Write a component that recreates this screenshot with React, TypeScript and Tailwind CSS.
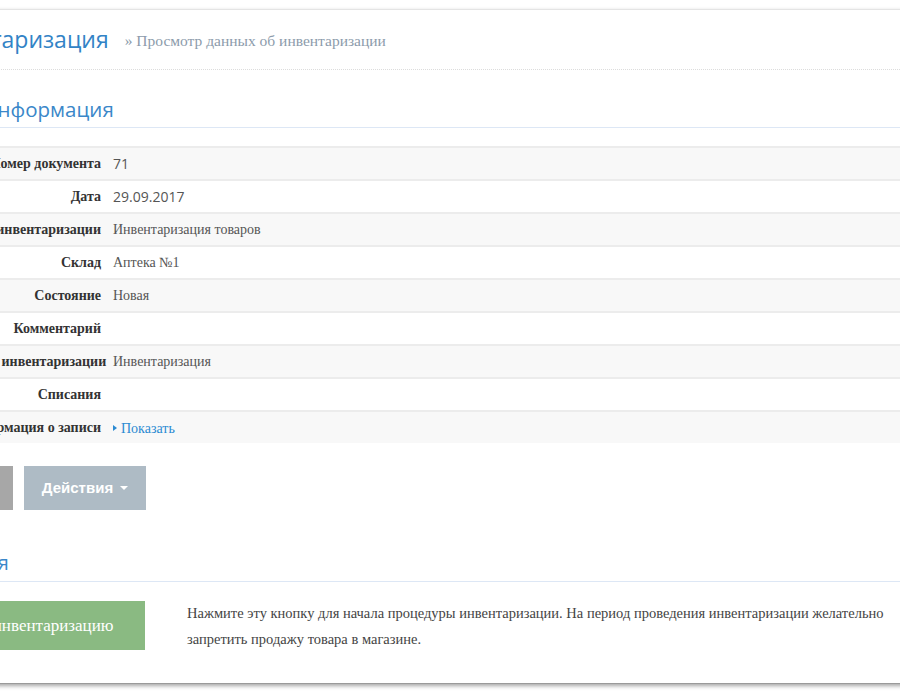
import React from 'react'

type Row = { label: string; value?: React.ReactNode; sans?: boolean }

const rows: Row[] = [
	{ label: 'Номер документа', value: '71', sans: true },
	{ label: 'Дата', value: '29.09.2017', sans: true },
	{ label: 'Тип инвентаризации', value: 'Инвентаризация товаров' },
	{ label: 'Склад', value: 'Аптека №1' },
	{ label: 'Состояние', value: 'Новая' },
	{ label: 'Комментарий' },
	{ label: 'Документ инвентаризации', value: 'Инвентаризация' },
	{ label: 'Списания' },
	{
		label: 'Информация о записи',
		value: (
			<a className="inline-flex items-center gap-[4px] text-[#2b8ad2]">
				<span className="inline-block w-0 h-0 border-y-[3.5px] border-y-transparent border-l-[4px] border-l-[#2b8ad2]" />
				Показать
			</a>
		),
	},
]

const serif = "font-['Liberation_Serif',serif]"
const sans = "font-['Open_Sans',sans-serif]"

export default function App() {
	return (
		<div className="w-[900px] h-[700px] overflow-hidden bg-white">
			<div className="w-[1100px] ml-[-100px] mt-[9px] border-t border-[#e4e4e4] border-b border-b-[#9a9a9a] shadow-[0_2px_4px_rgba(0,0,0,0.35)] bg-white">
				{/* page header */}
				<div className="h-[60px] pl-[18px] flex items-center gap-[16px] border-b border-dotted border-[#dcdcdc]">
					<h1 className={`${sans} text-[23px] text-[#3283c6] leading-none`}>Инвентаризация</h1>
					<span className={`${serif} text-[15.5px] text-[#8c9bab] leading-none mt-[3px]`}>
						» Просмотр данных об инвентаризации
					</span>
				</div>

				<h2 className={`${sans} mt-[25px] pl-[82px] text-[20.5px] leading-[28px] pb-[4px] text-[#3a87c9] border-b border-[#dde7f5]`}>
					Информация
				</h2>

				{/* document fields */}
				<div className="mt-[18px] pl-[36px]">
					{rows.map((r, i) => (
						<div
							key={r.label}
							className={`flex h-[33px] items-center border-t-2 border-[#ececec] ${i % 2 === 0 ? 'bg-[#f8f8f8]' : 'bg-white'}`}
						>
							<div className={`${serif} w-[171px] shrink-0 pr-[6px] text-right font-bold text-[14px] text-[#333] whitespace-nowrap`}>
								{r.label}
							</div>
							<div className={`${r.sans ? sans : serif} pl-[6px] text-[14px] text-[#555]`}>{r.value}</div>
						</div>
					))}
				</div>

				<div className="mt-[23px] pl-[36px] flex gap-[11px]">
					<button className={`${sans} h-[44px] w-[77px] bg-[#a7a7a7] text-white text-[14px] font-bold`}>
						Назад
					</button>
					<button className="h-[44px] w-[122px] bg-[#aebbc5] text-white text-[15px] font-bold font-['Liberation_Sans',sans-serif] flex items-center justify-center gap-[7px]">
						Действия
						<span className="inline-block w-0 h-0 border-x-[4px] border-x-transparent border-t-[4px] border-t-white" />
					</button>
				</div>

				<h2 className={`${sans} mt-[39px] pl-[10px] text-[20px] leading-[28px] pb-[4px] text-[#3a87c9] border-b border-[#dde7f5]`}>
					Операция
				</h2>

				<div className="mt-[19px] pl-[7px] pb-[31px] flex items-start gap-[42px]">
					<button className={`${serif} h-[49px] w-[238px] shrink-0 bg-[#8aba82] text-white text-[17px]`}>
						Начать инвентаризацию
					</button>
					<p className={`${serif} max-w-[720px] text-[14.5px] leading-[26px] text-[#444] -mt-[1px]`}>
						Нажмите эту кнопку для начала процедуры инвентаризации. На период проведения инвентаризации желательно
						запретить продажу товара в магазине.
					</p>
				</div>
			</div>
		</div>
	)
}
